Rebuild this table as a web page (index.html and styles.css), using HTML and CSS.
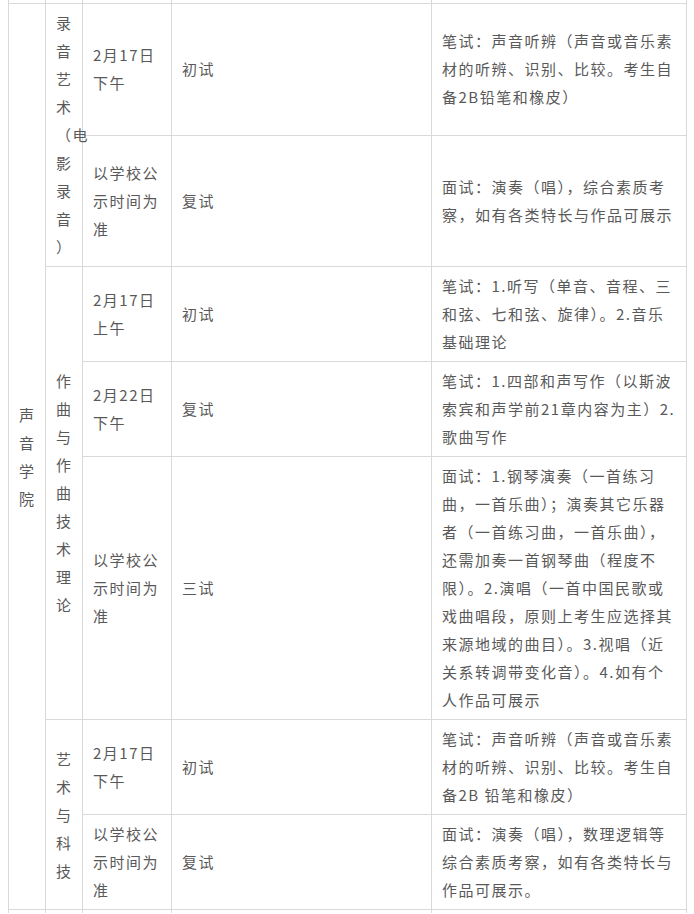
FILE: index.html
```html
<!DOCTYPE html>
<html lang="zh-CN">
<head>
<meta charset="utf-8">
<title>声音学院</title>
<link rel="stylesheet" href="styles.css">
</head>
<body>
<table class="exam">
  <colgroup>
    <col class="c-school">
    <col class="c-major">
    <col class="c-date">
    <col class="c-round">
    <col class="c-desc">
  </colgroup>
  <tbody>
    <tr class="cut cut-top">
      <td></td><td></td><td></td><td></td><td></td>
    </tr>
    <tr>
      <td rowspan="7">声音学院</td>
      <td rowspan="2">录音艺术（电影录音&#8203;）</td>
      <td>2月17日下午</td>
      <td>初试</td>
      <td>笔试：声音听辨（声音或音乐素材的听辨、识别、比较。考生自备2B铅笔和橡皮）</td>
    </tr>
    <tr>
      <td>以学校公示时间为准</td>
      <td>复试</td>
      <td>面试：演奏（唱），综合素质考察，如有各类特长与作品可展示</td>
    </tr>
    <tr>
      <td rowspan="3">作曲与作曲技术理论</td>
      <td>2月17日上午</td>
      <td>初试</td>
      <td>笔试：1.听写（单音、音程、三和弦、七和弦、旋律）。2.音乐基础理论</td>
    </tr>
    <tr>
      <td>2月22日下午</td>
      <td>复试</td>
      <td>笔试：1.四部和声写作（以斯波索宾和声学前21章内容为主）2.歌曲写作</td>
    </tr>
    <tr>
      <td>以学校公示时间为准</td>
      <td>三试</td>
      <td>面试：1.钢琴演奏（一首练习曲，一首乐曲）；演奏其它乐器者（一首练习曲，一首乐曲），还需加奏一首钢琴曲（程度不限）。2.演唱（一首中国民歌或戏曲唱段，原则上考生应选择其来源地域的曲目）。3.视唱（近关系转调带变化音）。4.如有个人作品可展示</td>
    </tr>
    <tr>
      <td rowspan="2">艺术与科技</td>
      <td>2月17日下午</td>
      <td>初试</td>
      <td>笔试：声音听辨（声音或音乐素材的听辨、识别、比较。考生自备2B 铅笔和橡皮）</td>
    </tr>
    <tr>
      <td>以学校公示时间为准</td>
      <td>复试</td>
      <td>面试：演奏（唱），数理逻辑等综合素质考察，如有各类特长与作品可展示。</td>
    </tr>
    <tr class="cut cut-bottom">
      <td></td><td></td><td></td><td></td><td></td>
    </tr>
  </tbody>
</table>
</body>
</html>
```

FILE: styles.css
```css
html, body {
  margin: 0;
  background: #ffffff;
}
body {
  padding: 0 8px;
  font-family: "Noto Sans CJK SC", "Microsoft YaHei", sans-serif;
}
.exam {
  border-collapse: collapse;
  table-layout: fixed;
  width: 678px;
}
.c-school { width: 37px; }
.c-major { width: 37px; }
.c-date { width: 89px; }
.c-round { width: 260px; }
.c-desc { width: 255px; }
.exam td {
  border: 1px solid #d9d9d9;
  padding: 5px 10px;
  font-size: 15px;
  line-height: 28px;
  letter-spacing: 1.5px;
  color: #595959;
  vertical-align: middle;
  text-align: left;
  word-break: break-all;
}
.exam .cut td {
  padding: 0;
  height: 3px;
  line-height: 0;
  font-size: 0;
}
.exam .cut-top td {
  border-top: none;
}
.exam .cut-bottom td {
  border-bottom: none;
}
```
